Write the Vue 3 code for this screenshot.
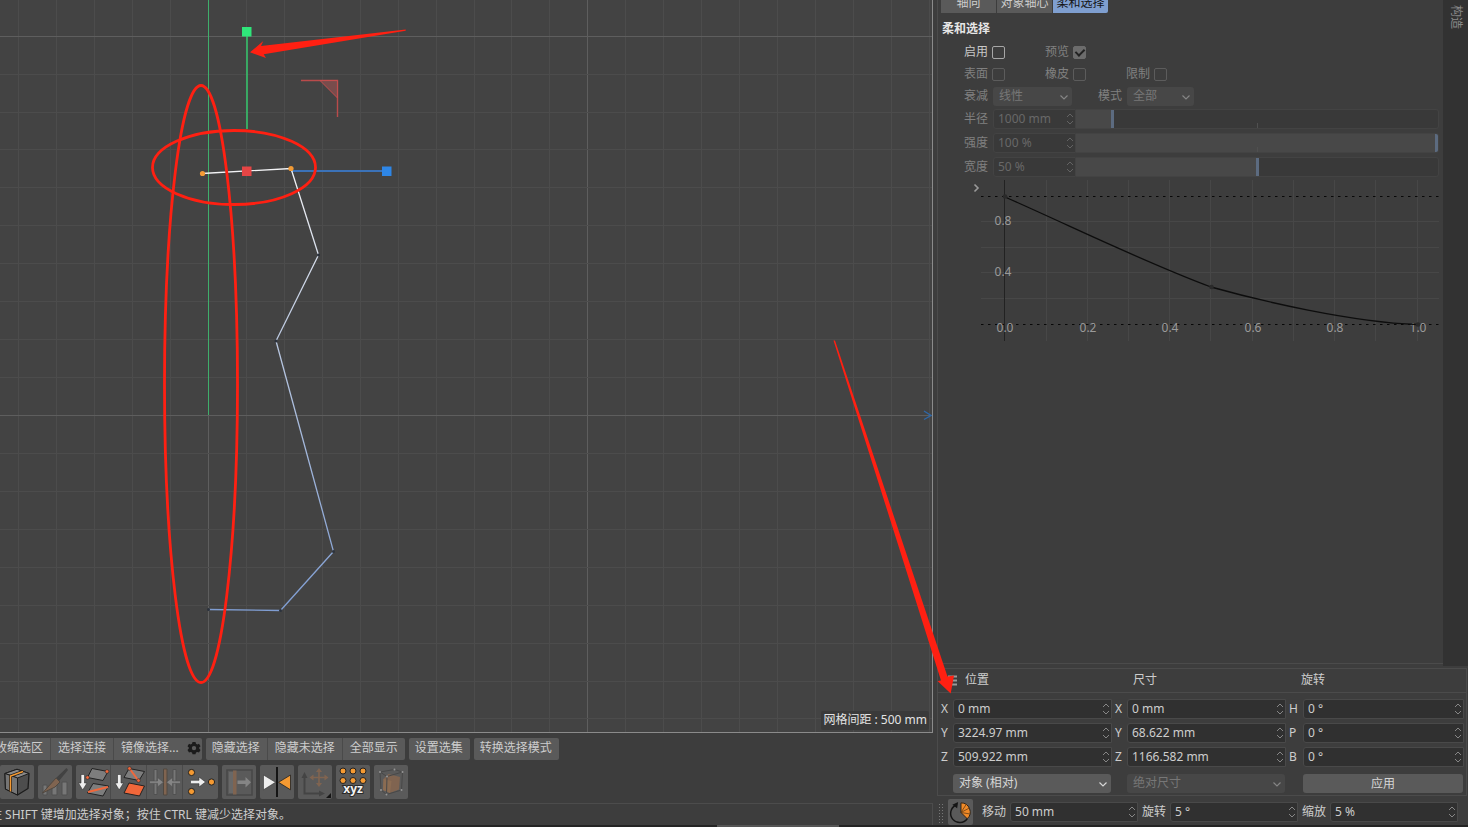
<script setup>
import { ref } from 'vue'

const step = 37.93
const gridX = Array.from({ length: 54 }, (_, i) => {
  const n = i - 5
  return { at: Math.round(208 + n * step) + 0.5, major: n % 10 === 0 }
})
const gridY = Array.from({ length: 42 }, (_, i) => {
  const n = i - 10
  return { at: Math.round(415 + n * step) + 0.5, major: n % 10 === 0 }
})

const commandGroups = [
  ['收缩选区', '选择连接', '镜像选择...'],
  ['隐藏选择', '隐藏未选择', '全部显示'],
  ['设置选集'],
  ['转换选择模式'],
]

const tabs = ['轴向', '对象轴心', '柔和选择']
const toggles = [
  [
    { id: 'enable', label: '启用', on: false, active: true },
    { id: 'preview', label: '预览', on: true },
  ],
  [
    { id: 'surface', label: '表面', on: false },
    { id: 'rubber', label: '橡皮', on: false },
    { id: 'limit', label: '限制', on: false },
  ],
]
const sliders = [
  { id: 'radius', label: '半径', value: '1000 mm', pct: 10.5, tick: true },
  { id: 'strength', label: '强度', value: '100 %', pct: 100, tick: true },
  { id: 'width', label: '宽度', value: '50 %', pct: 50.5, tick: false },
]

const coords = ref([
  [
    { axis: 'X', group: '位置', value: '0 mm' },
    { axis: 'X', group: '尺寸', value: '0 mm' },
    { axis: 'H', group: '旋转', value: '0 °' },
  ],
  [
    { axis: 'Y', group: '位置', value: '3224.97 mm' },
    { axis: 'Y', group: '尺寸', value: '68.622 mm' },
    { axis: 'P', group: '旋转', value: '0 °' },
  ],
  [
    { axis: 'Z', group: '位置', value: '509.922 mm' },
    { axis: 'Z', group: '尺寸', value: '1166.582 mm' },
    { axis: 'B', group: '旋转', value: '0 °' },
  ],
])
const steps = ref([
  { id: 'step-move', label: '移动', value: '50 mm' },
  { id: 'step-rotate', label: '旋转', value: '5 °' },
  { id: 'step-scale', label: '缩放', value: '5 %' },
])

const curveX = [66, 107, 148, 189, 230, 272, 313, 354, 395, 437]
const curveY = [41, 67, 92, 118]
const xLabels = [
  [24, '0.0'], [107, '0.2'], [189, '0.4'], [272, '0.6'], [354, '0.8'], [437, '1.0'],
]
</script>

<template>
  <div class="app">
    <main class="workspace">
      <section class="left">
        <div class="viewport">
          <svg class="scene" aria-label="视图">
            <g v-for="l in gridX" :key="'x' + l.at">
              <line :x1="l.at" :x2="l.at" y1="0" y2="100%" :class="l.major ? 'major' : 'minor'" />
            </g>
            <g v-for="l in gridY" :key="'y' + l.at">
              <line x1="0" x2="100%" :y1="l.at" :y2="l.at" :class="l.major ? 'major' : 'minor'" />
            </g>
            <defs>
              <linearGradient id="spline" gradientUnits="userSpaceOnUse" x1="0" y1="168" x2="0" y2="611">
                <stop offset="0" stop-color="#f4f4f6" />
                <stop offset="0.4" stop-color="#b9c7e0" />
                <stop offset="1" stop-color="#7f9dd2" />
              </linearGradient>
            </defs>
            <path d="M208.500 0V415" stroke="#3fae6b" fill="none" />
            <path d="M924 411l7 4.500-7 4" stroke="#2f68a8" fill="none" stroke-width="1.300" />
            <path d="M301 80.500H337.500V117" stroke="#b94b4b" fill="none" stroke-width="1.400" />
            <path d="M320 80.500H337.500V98Z" stroke="#c34e4e" fill="#8e5050" fill-opacity="0.700" />
            <path d="M291 171H384" stroke="#3b72b8" stroke-width="1.800" />
            <path d="M247 34V129" stroke="#35c96c" stroke-width="1.500" />
            <path d="M202 173.500L291 168.500L318.500 255L276 341L333.500 551.500L280.500 610.500L208.500 609.500" fill="none" stroke="url(#spline)" stroke-width="1.300" />
            <g fill="#2c323c">
              <circle cx="318.500" cy="255" r="1.500" /><circle cx="276" cy="341" r="1.500" />
              <circle cx="333.500" cy="551.500" r="1.500" /><circle cx="280.500" cy="610.500" r="1.500" />
              <circle cx="208.500" cy="609.500" r="1.500" />
            </g>
            <rect x="242" y="27" width="9.500" height="9.500" fill="#2fe67a" />
            <rect x="382" y="166.500" width="9.500" height="9.500" fill="#2e86e6" />
            <rect x="242" y="166.500" width="9.500" height="9.500" fill="#e64545" />
            <circle cx="202.500" cy="173.500" r="2.600" fill="#f39b35" />
            <circle cx="291" cy="168.500" r="2.600" fill="#f39b35" />
          </svg>
          <span class="grid-note">网格间距 : 500 mm</span>
        </div>

        <div class="commands">
          <div v-for="(g, gi) in commandGroups" :key="gi" class="group">
            <button v-for="c in g" :key="c" type="button">
              {{ c }}
              <svg v-if="c === '镜像选择...'" class="gear" viewBox="0 0 14 14">
                <path d="M5.500 1h3l.5 1.700 1.300.7 1.700-.6 1.500 2.500-1.300 1.300v1l1.300 1.300-1.500 2.500-1.700-.5-1.300.7-.5 1.600h-3L5 11.600l-1.300-.7-1.700.5L.5 8.900l1.300-1.300v-1L.5 5.300 2 2.800l1.700.6L5 2.700Z" fill="#1b1b1b" />
                <circle cx="7" cy="7.100" r="2.200" fill="#5c5c5c" />
              </svg>
            </button>
          </div>
        </div>

        <div class="tools">
          <div class="group">
            <button type="button" aria-label="循环切割">
              <svg viewBox="0 0 34 34">
                <path d="M5 8.500L17 4.300L29 8.500L28 23.500L17.500 30L5.500 24Z" fill="#4d4d4d" stroke="#1c1c1c" stroke-width="1.300" stroke-linejoin="round" />
                <path d="M5 8.500L17 4.300L29 8.500L17.500 13Z" fill="#8a8a8a" stroke="#1c1c1c" />
                <path d="M5 8.500L17.500 13V30L5.500 24Z" fill="#757575" stroke="#1c1c1c" />
                <path d="M10.500 26.500V11L23 6.500" fill="none" stroke="#1c1c1c" stroke-width="3" />
                <path d="M10.500 26.500V11L23 6.500" fill="none" stroke="#f59a32" stroke-width="1.500" />
              </svg>
            </button>
          </div>
          <div class="group">
            <button type="button" disabled aria-label="笔刷">
              <svg viewBox="0 0 34 34">
                <path d="M5 20h4v10H5zM14 20h5v10h-5zM24 17h5v13h-5z" fill="#777" stroke="#505050" />
                <path d="M28.500 3L30 5L21 16L18 13Z" fill="#424242" />
                <path d="M18 13L22 17L17 22L4.500 28Z" fill="#806450" stroke="#504840" />
              </svg>
            </button>
          </div>
          <div class="group">
            <button type="button" aria-label="连接点">
              <svg viewBox="0 0 34 34">
                <path d="M16 3.500L32 6.500L27 15.500L11.500 12.500Z" fill="#7d7d7d" stroke="#222" />
                <path d="M17 18.500L32.500 21L27 31L11.500 28Z" fill="#7d7d7d" stroke="#222" />
                <path d="M12 27L32 22" stroke="#f1673a" stroke-width="2" />
                <circle cx="11.500" cy="12.500" r="1.800" fill="#f1673a" stroke="#222" stroke-width="0.500" />
                <circle cx="31" cy="6.500" r="1.800" fill="#f1673a" stroke="#222" stroke-width="0.500" />
                <path d="M5 9.500h3.500v8.500H11L6.700 25L2.500 18H5Z" fill="#eee" stroke="#333" stroke-width="0.600" />
              </svg>
            </button>
            <button type="button" aria-label="溶解边">
              <svg viewBox="0 0 34 34">
                <path d="M17.500 3.500L33 6.500L27.500 15.500L12.500 12.500Z" fill="#7d7d7d" stroke="#222" />
                <path d="M17.500 18L33 21L28 31L12.500 28Z" fill="#f1673a" stroke="#222" />
                <path d="M18 3.500L26.500 15" stroke="#f1673a" stroke-width="2" />
                <circle cx="18" cy="3.500" r="1.800" fill="#f1673a" stroke="#222" stroke-width="0.500" />
                <circle cx="27" cy="15.500" r="1.800" fill="#f1673a" stroke="#222" stroke-width="0.500" />
                <path d="M6 9.500h3.500v8.500H12L7.700 25L3.500 18H6Z" fill="#eee" stroke="#333" stroke-width="0.600" />
              </svg>
            </button>
            <button type="button" disabled aria-label="缝合">
              <svg viewBox="0 0 34 34">
                <path d="M6.500 4.500h3v25h-3zM25.500 4.500h3v25h-3z" fill="#777" stroke="#505050" />
                <path d="M16 4h3.500v26H16z" fill="#806450" stroke="#504840" />
                <path d="M2 16h8V12.500l6 4.700-6 4.700v-3.500H2zM33 16h-8V12.500l-6 4.700 6 4.700v-3.500h8z" fill="#858585" stroke="#505050" stroke-width="0.600" />
              </svg>
            </button>
            <button type="button" aria-label="焊接">
              <svg viewBox="0 0 34 34">
                <g fill="#f59a32" stroke="#222">
                  <circle cx="8" cy="7.500" r="3.100" /><circle cx="8" cy="26.500" r="3.100" /><circle cx="28" cy="17" r="3.100" />
                </g>
                <path d="M7 15.300h8.500V12L22 17l-6.500 5v-3.300H7z" fill="#eee" stroke="#333" stroke-width="0.600" />
              </svg>
            </button>
          </div>
          <div class="group">
            <button type="button" disabled aria-label="滑动">
              <svg viewBox="0 0 34 34">
                <path d="M5 5h25v25H5z" fill="none" stroke="#484848" stroke-width="1.600" />
                <path d="M7 7h4v21H7z" fill="#686868" />
                <path d="M11 5.500h3.500v24H11z" fill="#806450" />
                <path d="M15.500 15.500h8V12l5.500 5.200-5.500 5.200v-3.500h-8z" fill="#858585" />
              </svg>
            </button>
          </div>
          <div class="group">
            <button type="button" aria-label="镜像">
              <svg viewBox="0 0 34 34">
                <path d="M17 2V32" stroke="#151515" stroke-width="2" />
                <path d="M3.500 10L15.500 17.300L3.500 24.800Z" fill="#eee" stroke="#333" stroke-width="0.600" />
                <path d="M30.500 10L18.500 17.300L30.500 24.800Z" fill="#f59a32" stroke="#222" stroke-width="0.800" />
              </svg>
            </button>
          </div>
          <div class="group">
            <button type="button" disabled aria-label="轴对齐">
              <svg viewBox="0 0 34 34">
                <path d="M6.500 12V28.500H22" fill="none" stroke="#444" stroke-width="2" />
                <path d="M6.500 7L9.500 13h-6zM27 28.500l-6-3v6z" fill="#444" />
                <path d="M21 5v15M13.500 12.500h15" stroke="#806450" stroke-width="1.600" />
                <path d="M21 3l3 4h-6zM21 22l3-4h-6zM11.500 12.500l4-3v6zM30.500 12.500l-4-3v6z" fill="#806450" />
                <path d="M33 28v5h-5z" fill="#151515" />
              </svg>
            </button>
          </div>
          <div class="group">
            <button type="button" aria-label="设置点值">
              <svg viewBox="0 0 34 34">
                <g fill="#f59a32" stroke="#222">
                  <circle v-for="n in 6" :key="n" :cx="7 + ((n - 1) % 3) * 10" :cy="n > 3 ? 15.5 : 6" r="3" />
                </g>
                <text class="xyz" x="17" y="28" text-anchor="middle">xyz</text>
              </svg>
            </button>
          </div>
          <div class="group">
            <button type="button" disabled aria-label="量化">
              <svg viewBox="0 0 34 34">
                <path d="M9.500 14l5-5 11.500 3-1 12.500L16 28l-7-3Z" fill="#806450" />
                <path d="M9.500 14l8 2L16 28l-7-3Z" fill="#8b6c52" />
                <path d="M6 7L20.500 4.500L28.500 7L27.500 25L12.500 29.500L7 25ZM6 7l7 4.500L28.500 7M13 11.500L12.500 29.500" fill="none" stroke="#484848" />
                <g fill="#969696">
                  <circle cx="6" cy="7" r="1" /><circle cx="20.500" cy="4.500" r="1" /><circle cx="28.500" cy="7" r="1" />
                  <circle cx="27.500" cy="25" r="1" /><circle cx="12.500" cy="29.500" r="1" /><circle cx="7" cy="25" r="1" /><circle cx="13" cy="11.500" r="1" />
                </g>
              </svg>
            </button>
          </div>
        </div>

        <div class="status"><span>住 SHIFT 键增加选择对象；按住 CTRL 键减少选择对象。</span></div>
      </section>

      <section class="right">
        <div class="attr-wrap">
          <div class="attributes">
            <div class="tabs">
              <button v-for="(t, i) in tabs" :key="t" type="button" :class="{ on: i === 2 }">{{ t }}</button>
            </div>
            <h2>柔和选择</h2>
            <div v-for="(row, ri) in toggles" :key="ri" class="checks">
              <div v-for="t in row" :key="t.id" class="check" :class="{ active: t.active }">
                <label :for="t.id">{{ t.label }}</label>
                <input :id="t.id" type="checkbox" :checked="t.on" :disabled="!t.active" />
              </div>
            </div>
            <div class="falloff">
              <label for="falloff">衰减</label>
              <span class="select wide">
                <select id="falloff" disabled><option>线性</option></select>
                <svg viewBox="0 0 8 5"><path d="M0.500 0.500L4 4L7.500 0.500" /></svg>
              </span>
              <label for="mode" class="second">模式</label>
              <span class="select narrow">
                <select id="mode" disabled><option>全部</option></select>
                <svg viewBox="0 0 8 5"><path d="M0.500 0.500L4 4L7.500 0.500" /></svg>
              </span>
            </div>
            <div v-for="s in sliders" :key="s.id" class="slider-row">
              <label :for="s.id">{{ s.label }}</label>
              <span class="field">
                <input :id="s.id" type="text" :value="s.value" disabled />
                <svg class="spin" viewBox="0 0 8 12"><path d="M1 4L4 1L7 4M1 8L4 11L7 8" /></svg>
              </span>
              <div class="track">
                <div class="fill" :style="{ width: s.pct + '%' }"></div>
                <i v-if="s.tick"></i>
              </div>
            </div>
            <div class="curve">
              <svg class="arrow" viewBox="0 0 8 10"><path d="M1.500 1.500L5 5L1.500 8.500" /></svg>
              <svg class="graph" viewBox="0 0 458 161">
                <g stroke="#474747">
                  <line v-for="x in curveX" :key="x" :x1="x - 0.5" :x2="x - 0.5" y1="0" y2="161" />
                  <line v-for="y in curveY" :key="y" x1="0" x2="458" :y1="y + 0.5" :y2="y + 0.5" />
                </g>
                <path d="M0 16.500H458M0 144.500H458" stroke="#080808" stroke-width="1.200" stroke-dasharray="2.500 4.500" />
                <path d="M23.500 0V161" stroke="#222" />
                <g class="axis">
                  <text x="22" y="45">0.8</text>
                  <text x="22" y="96">0.4</text>
                  <text v-for="l in xLabels" :key="l[1]" :x="l[0]" y="152">{{ l[1] }}</text>
                </g>
                <path d="M24 17C92 47 165 83 230 107C280 121 370 142 436 144.500" fill="none" stroke="#0d0d0d" stroke-width="1.300" />
                <g fill="#2a2a2a"><circle cx="24" cy="16.500" r="2.300" /><circle cx="230.500" cy="107" r="2.300" /><circle cx="437" cy="144.500" r="2.300" /></g>
              </svg>
            </div>
          </div>
          <div class="side-tab"><span>构造</span></div>
        </div>

        <div class="coordinates">
          <div class="heads">
            <svg viewBox="0 0 9 11"><path d="M0 1.500H9M0 5.500H9M0 9.500H9" /></svg>
            <span>位置</span><span>尺寸</span><span>旋转</span>
          </div>
          <div class="fields">
            <template v-for="(row, ri) in coords" :key="ri">
              <template v-for="(c, ci) in row" :key="ci">
                <label :for="'c' + ri + ci">{{ c.axis }}</label>
                <span class="field live">
                  <input :id="'c' + ri + ci" v-model="c.value" type="text" :aria-label="c.group + ' ' + c.axis" />
                  <svg class="spin" viewBox="0 0 8 12"><path d="M1 4L4 1L7 4M1 8L4 11L7 8" /></svg>
                </span>
              </template>
            </template>
            <span></span>
            <span class="select live">
              <select aria-label="坐标模式"><option>对象 (相对)</option></select>
              <svg viewBox="0 0 8 5"><path d="M0.500 0.500L4 4L7.500 0.500" /></svg>
            </span>
            <span></span>
            <span class="select">
              <select aria-label="尺寸模式" disabled><option>绝对尺寸</option></select>
              <svg viewBox="0 0 8 5"><path d="M0.500 0.500L4 4L7.500 0.500" /></svg>
            </span>
            <span></span>
            <button type="button" class="apply">应用</button>
          </div>
        </div>

        <div class="steps">
          <i class="grip"></i>
          <button type="button" aria-label="量化">
            <svg viewBox="0 0 26 26">
              <path d="M13.500 3.500A9.500 9.500 0 0 1 20 20L13.500 13.500Z" fill="#f08a28" stroke="#2a2118" />
              <path d="M13.500 13.500L22 9M13.500 13.500L22.500 15M13.500 13.500L19 5" stroke="#5f3913" stroke-width="0.800" />
              <path d="M20 20A9.500 9.500 0 1 1 8 6" fill="none" stroke="#151515" stroke-width="1.500" />
              <path d="M4.500 5.500L10.500 2.500L9.500 9Z" fill="#151515" />
            </svg>
          </button>
          <template v-for="s in steps" :key="s.id">
            <label :for="s.id">{{ s.label }}</label>
            <span class="field live">
              <input :id="s.id" v-model="s.value" type="text" />
              <svg class="spin" viewBox="0 0 8 12"><path d="M1 4L4 1L7 4M1 8L4 11L7 8" /></svg>
            </span>
          </template>
        </div>
      </section>
    </main>
    <div class="scrollbar"><i></i></div>

    <svg class="marks" viewBox="0 0 960 700">
      <g fill="none" stroke="#ff2012" stroke-width="2.800">
        <ellipse cx="201" cy="384" rx="36.500" ry="298.500" />
        <ellipse cx="234" cy="167.500" rx="81.500" ry="37" />
      </g>
      <g fill="#ff2012">
        <path d="M250 52.300L263.300 41L261 46L405.700 29.500V30.800L263.700 54.300L266 58Z" />
        <path d="M950.700 693.500L937.500 681L941 680.500L833.500 340.500H835L947.500 676.500L954 675.500Z" />
      </g>
    </svg>
  </div>
</template>

<style>
body { margin: 0; background: #3d3d3d; }
</style>

<style scoped>
.app, .app * { box-sizing: border-box; }
.app {
  position: relative;
  display: flex;
  flex-direction: column;
  min-height: 100vh;
  overflow: hidden;
  background: #3d3d3d;
  color: #cdcdcd;
  font: 12px/16px "Noto Sans", "Noto Sans CJK SC", sans-serif;
}
button, input, select { font: inherit; color: inherit; margin: 0; border: 0; padding: 0; }
svg { display: block; }
.workspace { flex: 1; display: flex; }
.left { flex: 1; min-width: 0; display: flex; flex-direction: column; }
.right { width: 535px; padding-left: 4px; display: flex; flex-direction: column; }

.viewport {
  position: relative;
  flex: 1;
  background: #434343;
  border-right: 1px solid #8b8b8b;
  border-bottom: 1px solid #8b8b8b;
  overflow: hidden;
}
.scene { position: absolute; inset: 0; width: 100%; height: 100%; }
.minor { stroke: #4c4c4c; }
.major { stroke: #5e5e5e; }
.grid-note {
  position: absolute;
  right: 3px;
  bottom: 2px;
  padding: 1px 2px 2px;
  border-radius: 2px;
  background: #3a3a3a;
  color: #e4e4e4;
}

.commands, .tools { display: flex; gap: 4px; overflow: hidden; }
.commands { margin-top: 5px; }
.tools { margin-top: 5px; }
.group { display: flex; flex: none; background: #5a5a5a; border-radius: 2px; overflow: hidden; }
.group button { background: none; white-space: nowrap; }
.group button + button { border-left: 1px solid #4a4a4a; }
.commands button { display: flex; align-items: center; gap: 8px; height: 22px; padding: 0 7px 2px 6px; }
.commands button + button { padding-left: 7px; }
.commands .group:first-child { margin-left: -11px; }
.commands .group:first-child button:last-child { padding-right: 1px; }
.gear { width: 14px; height: 14px; }
.tools svg { width: 34px; height: 34px; }
.tools .group button + button svg { width: 35px; }
.xyz { font: bold 12px "Open Sans", "Noto Sans", sans-serif; fill: #f2f2f2; stroke: #2a2a2a; stroke-width: 2px; paint-order: stroke; }
.status {
  height: 22px;
  margin-top: 4px;
  border-top: 1px solid #4c4c4c;
  border-right: 1px solid #4c4c4c;
  line-height: 22px;
  overflow: hidden;
  white-space: nowrap;
}
.status span { margin-left: -10px; }

.attr-wrap { flex: 1; display: flex; }
.attributes {
  flex: 1;
  min-width: 0;
  margin-bottom: 2px;
  padding: 0 4px 0 3px;
  border-left: 1px solid #4b4b4b;
  border-bottom: 1px solid #4b4b4b;
  color: #808080;
}
.side-tab { width: 25px; background: #323232; color: #8a8a8a; padding: 5px 0 0 5px; }
.side-tab span { display: block; writing-mode: vertical-rl; text-orientation: sideways; }
.tabs { display: flex; gap: 1px; margin-top: -7px; color: #cdcdcd; }
.tabs button { width: 55px; height: 20px; background: #5a5a5a; }
.tabs button:last-child { border-radius: 0 0 2px 0; }
.tabs .on { background: #7f9fd0; color: #151515; }
h2 { margin: 8px 0 4px 1px; font-size: 12px; line-height: 16px; color: #e6e6e6; }
.checks { display: flex; padding-left: 23px; height: 22px; }
.check { display: flex; align-items: center; gap: 4px; width: 81px; }
.check.active { color: #c8c8c8; }
.check input {
  position: relative;
  appearance: none;
  width: 13px;
  height: 13px;
  border: 1px solid #5c5c5c;
  border-radius: 2px;
}
.check.active input { border-color: #a6a6a6; }
.check input:checked { background: #6c6c6c; border-color: #6c6c6c; }
.check input:checked::after {
  content: "";
  position: absolute;
  left: 3px;
  top: 0;
  width: 4px;
  height: 7px;
  border: solid #222;
  border-width: 0 2px 2px 0;
  transform: rotate(45deg);
}
.falloff, .slider-row { display: flex; align-items: center; padding-left: 23px; }
.falloff { height: 22px; gap: 5px; margin-bottom: 2px; }
.falloff .second { margin-left: 21px; }
.select { position: relative; display: block; }
.select.wide { width: 79px; }
.select.narrow { width: 67px; }
.select select {
  display: block;
  appearance: none;
  width: 100%;
  height: 19px;
  padding: 0 6px 1px;
  border-radius: 3px;
  background: #474747;
  opacity: 1;
  color: #777;
}
.select.live select { background: #5a5a5a; color: #d6d6d6; }
.select svg { position: absolute; right: 4px; top: 8px; width: 8px; height: 5px; fill: none; stroke: #858585; stroke-width: 1.2; pointer-events: none; }
.select.live svg { stroke: #d6d6d6; }
.slider-row { height: 20px; margin-bottom: 4px; }
.slider-row label { width: 29px; }
.field {
  display: flex;
  align-items: center;
  min-width: 0;
  height: 20px;
  padding-right: 1px;
  border: 1px solid #434343;
  border-radius: 3px 0 0 3px;
  background: #393939;
}
.field input { flex: 1; min-width: 0; width: 0; height: 18px; padding: 0 0 1px 4px; background: none; outline: 0; }
.slider-row .field { width: 83px; color: #686868; }
.field.live { background: #303030; border-color: #494949; }
.spin { width: 8px; height: 12px; flex: none; fill: none; stroke: #636363; }
.live .spin { stroke: #868686; }
.track {
  position: relative;
  flex: 1;
  height: 20px;
  border: 1px solid #434343;
  border-left: 0;
  border-radius: 0 3px 3px 0;
  background: #393939;
  overflow: hidden;
}
.fill { height: 18px; background: #484848; border-right: 3px solid #5c6b80; }
.track i { position: absolute; left: 50%; bottom: 0; width: 1px; height: 5px; background: #505050; }
.curve { display: flex; padding-left: 32px; }
.arrow { width: 8px; height: 10px; margin-top: 2px; fill: none; stroke: #9a9a9a; stroke-width: 1.6; }
.graph { flex: 1; min-width: 0; margin-top: -1px; }
.axis text { text-anchor: middle; fill: #9a9a9a; font-size: 12px; }

.coordinates { margin: 2px 1px 0 0; border: 1px solid #4b4b4b; }
.heads {
  display: grid;
  grid-template-columns: 17px 168fr 168fr 165fr;
  align-items: center;
  height: 24px;
  padding: 0 0 1px 10px;
  border-bottom: 1px solid #4b4b4b;
}
.heads svg { width: 9px; height: 11px; stroke: #9a9a9a; stroke-width: 2; }
.fields {
  display: grid;
  grid-template-columns: 12px 159fr 15px 159fr 17px 161fr;
  row-gap: 4px;
  padding: 6px 2px 2px 3px;
  align-items: center;
}
.fields label { padding-left: 3px; }
.fields label:nth-child(6n + 1) { padding: 0; }
.fields .select { margin: 3px 1px 0 0; }
.apply { height: 19px; margin: 3px 1px 0 0; border-radius: 3px; background: #5a5a5a; color: #d6d6d6; }
.steps { display: flex; align-items: center; height: 29px; padding: 2px 10px 0 1px; gap: 4px; }
.grip { align-self: flex-end; width: 5px; height: 22px; background: radial-gradient(circle, #777 0 30%, transparent 35%) 0 0 / 3px 3px; }
.steps button { width: 25px; height: 26px; margin: 0 5px 0 1px; background: #5a5a5a; border-radius: 2px; }
.steps button svg { width: 25px; height: 26px; }
.steps .field { flex: 1; }
.scrollbar { height: 2px; background: #242424; }
.scrollbar i { display: block; width: 122px; height: 2px; margin-left: 717px; background: #555; }
.marks { position: absolute; left: 0; top: 0; width: 960px; height: 700px; pointer-events: none; }
</style>
